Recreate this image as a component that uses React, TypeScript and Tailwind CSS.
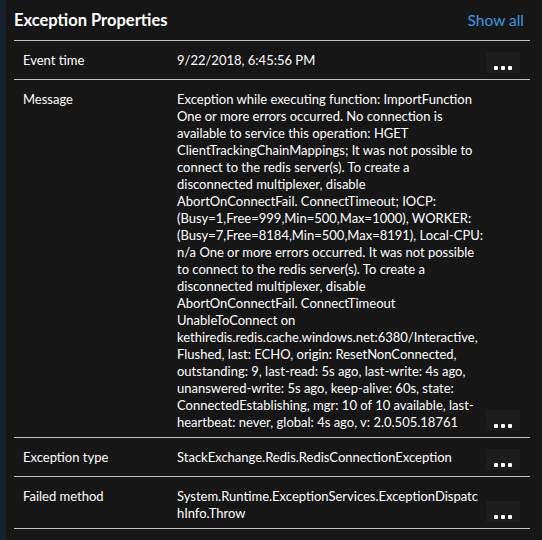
const MESSAGE = [
  'Exception while executing function: ImportFunction',
  'One or more errors occurred. No connection is',
  'available to service this operation: HGET',
  'ClientTrackingChainMappings; It was not possible to',
  'connect to the redis server(s). To create a',
  'disconnected multiplexer, disable',
  'AbortOnConnectFail. ConnectTimeout; IOCP:',
  '(Busy=1,Free=999,Min=500,Max=1000), WORKER:',
  '(Busy=7,Free=8184,Min=500,Max=8191), Local-CPU:',
  'n/a One or more errors occurred. It was not possible',
  'to connect to the redis server(s). To create a',
  'disconnected multiplexer, disable',
  'AbortOnConnectFail. ConnectTimeout',
  'UnableToConnect on',
  'kethiredis.redis.cache.windows.net:6380/Interactive,',
  'Flushed, last: ECHO, origin: ResetNonConnected,',
  'outstanding: 9, last-read: 5s ago, last-write: 4s ago,',
  'unanswered-write: 5s ago, keep-alive: 60s, state:',
  'ConnectedEstablishing, mgr: 10 of 10 available, last-',
  'heartbeat: never, global: 4s ago, v: 2.0.505.18761',
];

const ROWS: { label: string; lines: string[] }[] = [
  { label: 'Event time', lines: ['9/22/2018, 6:45:56 PM'] },
  { label: 'Message', lines: MESSAGE },
  { label: 'Exception type', lines: ['StackExchange.Redis.RedisConnectionException'] },
  {
    label: 'Failed method',
    lines: ['System.Runtime.ExceptionServices.ExceptionDispatc', 'hInfo.Throw'],
  },
];

function MoreButton() {
  return (
    <button
      aria-label="More"
      className="flex h-[21px] w-[34px] shrink-0 items-end justify-center gap-[3px] self-end bg-[#1c1c1c] pb-[3px]"
    >
      <span className="h-[4px] w-[4px] rounded-[1px] bg-white" />
      <span className="h-[4px] w-[4px] rounded-[1px] bg-white" />
      <span className="h-[4px] w-[4px] rounded-[1px] bg-white" />
    </button>
  );
}

function PropertyRow({ label, lines }: { label: string; lines: string[] }) {
  return (
    <div className="flex border-b border-[#c4c4c4] pt-[11px] pb-[6px] pl-[9px] pr-[10px]">
      <div className="w-[154px] shrink-0 text-[13px] leading-[17px] text-white">{label}</div>
      <div className="flex-1 text-[13px] leading-[17px] text-white">
        {lines.map((l, i) => (
          <div key={i} className="whitespace-nowrap">
            {l}
          </div>
        ))}
      </div>
      <MoreButton />
    </div>
  );
}

export default function App() {
  return (
    <div
      className="flex h-[540px] w-[542px] bg-[#161616]"
      style={{ fontFamily: 'Lato, "Open Sans", sans-serif' }}
    >
      <div className="w-[6px] shrink-0 bg-[#15212e]" />
      <div className="flex-1 pl-[8px] pr-[12px]">
        <div className="flex h-[41px] items-center justify-between border-b border-[#c4c4c4] pt-[1px] pr-[6px]">
          <h2 className="text-[16.5px] font-bold text-white">Exception Properties</h2>
          <a className="text-[15.5px] text-[#3e9ae0]">Show all</a>
        </div>
        {ROWS.map((r) => (
          <PropertyRow key={r.label} label={r.label} lines={r.lines} />
        ))}
      </div>
    </div>
  );
}
